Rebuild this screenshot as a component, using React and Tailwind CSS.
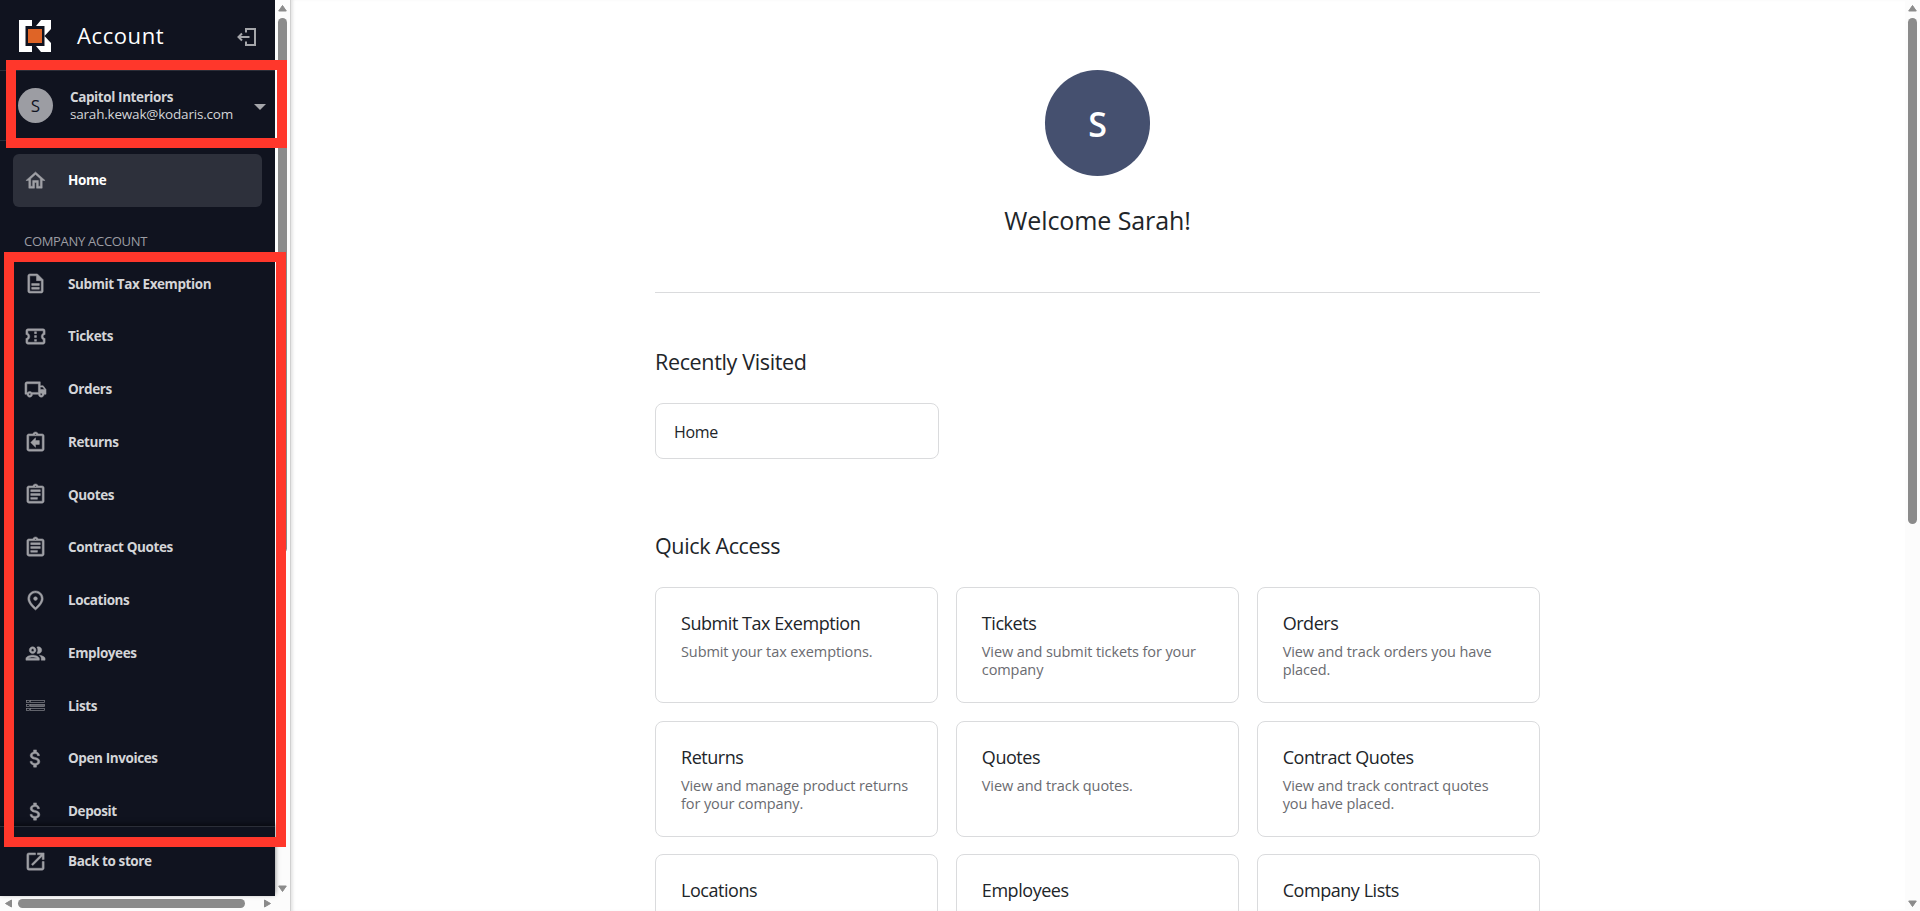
import React from 'react';
import {
    MdOutlineHome,
    MdOutlineDescription,
    MdOutlineConfirmationNumber,
    MdOutlineLocalShipping,
    MdOutlineAssignmentReturn,
    MdOutlineAssignment,
    MdOutlinePlace,
    MdAttachMoney,
    MdOpenInNew,
} from 'react-icons/md';

const ListsIcon = ({ size = 22 }) => (
    <svg width={size} height={size} viewBox="0 0 23 23" fill="none" stroke="#85868c" strokeWidth="0.7" className="shrink-0">
        <rect x="2.5" y="6.5" width="3" height="2" />
        <rect x="6.5" y="6.5" width="14" height="2" />
        <rect x="2.5" y="10.5" width="3" height="2" />
        <rect x="6.5" y="10.5" width="14" height="2" fill="#5c5e66" />
        <rect x="2.5" y="14.5" width="3" height="2" />
        <rect x="6.5" y="14.5" width="14" height="2" />
    </svg>
);

const PeopleIcon = ({ size = 22, className }) => (
    <svg width={size} height={size} viewBox="0 0 24 24" fill="currentColor" stroke="currentColor" className={className}>
        <path d="M9 13.75c-2.34 0-7 1.17-7 3.5V19h14v-1.75c0-2.33-4.66-3.5-7-3.5zM4.34 17c.84-.58 2.87-1.25 4.66-1.25s3.82.67 4.66 1.25H4.34zM9 12c1.93 0 3.5-1.57 3.5-3.5S10.93 5 9 5 5.5 6.57 5.5 8.5 7.07 12 9 12zm0-5c.83 0 1.5.67 1.5 1.5S9.83 10 9 10s-1.5-.67-1.5-1.5S8.17 7 9 7zm7.04 6.81c1.16.84 1.96 1.96 1.96 3.44V19h4v-1.75c0-2.02-3.5-3.17-5.96-3.44zM15 12c1.93 0 3.5-1.57 3.5-3.5S16.93 5 15 5c-.54 0-1.04.13-1.5.35.63.89 1 1.98 1 3.15s-.37 2.26-1 3.15c.46.22.96.35 1.5.35z" />
    </svg>
);

const menuItems = [
    { label: 'Submit Tax Exemption', icon: MdOutlineDescription },
    { label: 'Tickets', icon: MdOutlineConfirmationNumber },
    { label: 'Orders', icon: MdOutlineLocalShipping },
    { label: 'Returns', icon: MdOutlineAssignmentReturn },
    { label: 'Quotes', icon: MdOutlineAssignment },
    { label: 'Contract Quotes', icon: MdOutlineAssignment },
    { label: 'Locations', icon: MdOutlinePlace },
    { label: 'Employees', icon: PeopleIcon },
    { label: 'Lists', icon: ListsIcon },
    { label: 'Open Invoices', icon: MdAttachMoney },
    { label: 'Deposit', icon: MdAttachMoney },
];

const quickAccess = [
    { title: 'Submit Tax Exemption', text: 'Submit your tax exemptions.' },
    { title: 'Tickets', text: 'View and submit tickets for your company' },
    { title: 'Orders', text: 'View and track orders you have placed.' },
    { title: 'Returns', text: 'View and manage product returns for your company.' },
    { title: 'Quotes', text: 'View and track quotes.' },
    { title: 'Contract Quotes', text: 'View and track contract quotes you have placed.' },
    { title: 'Locations' },
    { title: 'Employees' },
    { title: 'Company Lists' },
];

function Logo() {
    return (
        <svg width="32" height="32" viewBox="0 0 32 32" className="shrink-0">
            <path fill="#fff" d="M0 0h13v6H6.5v20H13v6H0z" />
            <path fill="#fff" d="M22 0h10v9l-6.5 7V6H17z" />
            <path fill="#fff" d="M25.5 16l6.5 7v9H22l-5-6h8.5z" />
            <rect x="9" y="9" width="14" height="14" fill="#df6426" />
        </svg>
    );
}

function LogoutIcon() {
    return (
        <svg width="20" height="20" viewBox="0 0 20 20" fill="none" stroke="#a5a6aa" strokeWidth="2">
            <path d="M9 5.5V2h9v16H9v-3.5" />
            <path d="M12.5 10H1.5M5 6.5L1.5 10 5 13.5" />
        </svg>
    );
}

const Arrow = ({ d }) => (
    <svg width="9" height="9" viewBox="0 0 9 9" className="shrink-0">
        <path d={d} fill="#8b8b8b" stroke="#8b8b8b" strokeLinejoin="round" />
    </svg>
);

const UP = 'M4.5 1.5L8.3 7H.7z';
const DOWN = 'M4.5 7.5L8.3 2H.7z';
const LEFT = 'M1.5 4.5L7.5 1v7z';
const RIGHT = 'M7.5 4.5L1.5 1v7z';

function NavItem({ icon: Icon, label, active }) {
    return (
        <div
            className={`flex items-center h-[52.75px] mx-[13px] pl-[11px] rounded-md ${active ? 'bg-[#2d303b] text-white' : 'text-[#d4d5d8]'}`}
        >
            <Icon size={23} className="text-[#a0a1a6] shrink-0 stroke-[0.5] [&_path[fill=none]]:stroke-none" />
            <span className="ml-[21px] text-[13.5px] font-bold whitespace-nowrap tracking-[-0.4px]">{label}</span>
        </div>
    );
}

function Sidebar() {
    return (
        <div className="relative w-[290px] h-full shrink-0 flex flex-col bg-[#fcfcfc]">
            <div className="flex h-[896px]">
                <aside className="w-[275px] h-full flex flex-col bg-[#10131f]">
                    <div className="h-[71px] shrink-0 flex items-center pl-[19px] pr-[18px] pt-px border-b border-[#2b2e38]">
                        <Logo />
                        <h1 className="ml-[26px] text-[22px] text-white tracking-[0.6px]">Account</h1>
                        <span className="ml-auto mt-[3px]"><LogoutIcon /></span>
                    </div>
                    <div className="h-[70px] shrink-0 flex items-center pl-[18px] pr-[9px] border-b border-[#2b2e38]">
                        <div className="size-[35px] rounded-full bg-[#9c9da3] flex items-center justify-center text-[17px] text-[#10131f]">S</div>
                        <div className="ml-[17px] text-[13.5px] leading-[17px] text-[#d4d5d8] whitespace-nowrap">
                            <div className="font-bold tracking-[-0.4px]">Capitol Interiors</div>
                            <div className="tracking-[-0.2px]">sarah.kewak@kodaris.com</div>
                        </div>
                        <svg width="12" height="6" viewBox="0 0 12 6" className="ml-auto mt-[3px]">
                            <path d="M0 0h12L6 6z" fill="#a5a6aa" />
                        </svg>
                    </div>
                    <nav className="flex-1 min-h-0 overflow-hidden pt-[13px]">
                        <NavItem icon={MdOutlineHome} label="Home" active />
                        <div className="h-[50.7px] pt-[25px] pl-[24px] text-[13px] leading-[18px] tracking-[-0.3px] text-[#9c9da3] whitespace-nowrap">
                            COMPANY ACCOUNT
                        </div>
                        {menuItems.map((item) => (
                            <NavItem key={item.label} {...item} />
                        ))}
                    </nav>
                    <div className="h-[70px] shrink-0 pt-[8px] border-t border-[#2b2e38] shadow-[0_-2px_5px_rgba(0,0,0,0.5)]">
                        <NavItem icon={MdOpenInNew} label="Back to store" />
                    </div>
                </aside>
                <div className="w-[15px] flex flex-col items-center pt-1 pb-[3px]">
                    <Arrow d={UP} />
                    <div className="mt-[5px] w-[9px] h-[535px] rounded-full bg-[#8b8b8b]" />
                    <div className="mt-auto"><Arrow d={DOWN} /></div>
                </div>
            </div>
            <div className="h-[15px] w-[275px] flex items-center pl-1 pr-[3px]">
                <Arrow d={LEFT} />
                <div className="ml-[5px] w-[227px] h-[9px] rounded-full bg-[#8b8b8b]" />
                <div className="ml-auto"><Arrow d={RIGHT} /></div>
            </div>

            {/* highlighted areas */}
            <div className="absolute z-10 left-[6px] top-[60px] w-[281px] h-[88px] border-[10px] border-[#ff372b]" />
            <div className="absolute z-10 left-[4px] top-[252px] w-[282px] h-[595px] border-[10px] border-[#ff372b]" />
        </div>
    );
}

export default function App() {
    return (
        <div className="flex h-[911px] w-[1920px] overflow-hidden bg-white text-[#212529] font-['Open_Sans','Noto_Sans',sans-serif]">
            <Sidebar />
            <main className="flex-1 min-w-0 border-l border-[#d0d0d0] shadow-[inset_3px_0_3px_-1px_rgba(0,0,0,0.1)]">
                <div className="w-[885px] ml-[364px] pt-[70px]">
                    <div className="flex flex-col items-center border-b border-[#dadbdd] h-[223px]">
                        <div className="w-[105px] h-[106px] rounded-full bg-[#45506f] flex items-center justify-center text-white text-[34px] font-semibold pt-[2px]">S</div>
                        <h2 className="mt-[26px] text-[25px] leading-[36px] tracking-[-0.1px]">Welcome Sarah!</h2>
                    </div>

                    <h3 className="mt-[54px] text-[21.5px] leading-[30px] tracking-[-0.35px]">Recently Visited</h3>
                    <div className="mt-[26px] w-[284px] h-[56px] border border-[#dadbdd] rounded-lg flex items-center pl-[18px] pt-[2px] text-base tracking-[-0.3px]">
                        Home
                    </div>

                    <h3 className="mt-[72px] text-[21.5px] leading-[30px] tracking-[-0.35px]">Quick Access</h3>
                    <div className="mt-[26px] grid grid-cols-3 gap-x-[17.5px] gap-y-[17.6px]">
                        {quickAccess.map((item) => (
                            <div key={item.title} className="h-[116px] border border-[#dadbdd] rounded-lg px-[25px] pt-[23px]">
                                <h4 className="text-[18px] leading-[24px] tracking-[-0.45px]">{item.title}</h4>
                                {item.text && (
                                    <p className="mt-[8px] text-[14.5px] leading-[18px] tracking-[-0.1px] text-[#6a6b70]">{item.text}</p>
                                )}
                            </div>
                        ))}
                    </div>
                </div>
            </main>
            <div className="w-[15px] shrink-0 bg-[#fcfcfc] flex flex-col items-center pt-1 pb-[3px]">
                <Arrow d={UP} />
                <div className="mt-[5px] w-[9px] h-[506px] rounded-full bg-[#8b8b8b]" />
                <div className="mt-auto"><Arrow d={DOWN} /></div>
            </div>
        </div>
    );
}
